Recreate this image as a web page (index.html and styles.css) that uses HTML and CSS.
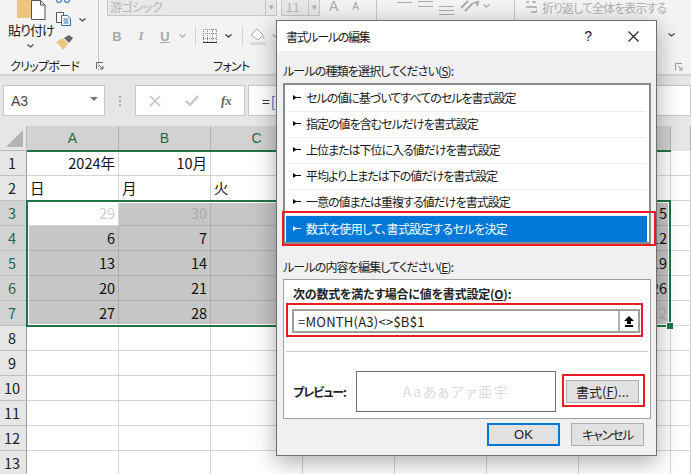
FILE: index.html
```html
<!DOCTYPE html>
<html lang="ja">
<head>
<meta charset="utf-8">
<title>書式ルールの編集</title>
<link rel="stylesheet" href="styles.css">
</head>
<body>
<div class="app">
  <header class="ribbon">
    <section class="group clip">
      <div class="clip-main">
        <div class="paste-col">
          <svg class="ic-paste" width="30" height="20" viewBox="0 0 30 20"><rect x="0" y="0" width="14" height="18" fill="#eec57f"/><path d="M14.5 .5h9l4.500 4.500v14.500h-13.500z" fill="#fff" stroke="#555"/><path d="M23.500 .5v4.500h4.500" fill="none" stroke="#555"/></svg>
          <span class="paste-label">貼り付け</span>
          <svg class="chev" width="7" height="4" viewBox="0 0 7 4"><path d="M.5.5l3 2.500 3-2.500" fill="none" stroke="#444" stroke-width="1.2"/></svg>
        </div>
        <div class="tool-col">
          <svg class="ic-cut" width="16" height="4" viewBox="0 0 16 4"><circle cx="3" cy="0" r="2.500" fill="none" stroke="#3d80c4" stroke-width="1.2"/><circle cx="11" cy="0" r="2.500" fill="none" stroke="#3d80c4" stroke-width="1.2"/></svg>
          <div class="copy-row">
            <svg width="16" height="14" viewBox="0 0 16 14"><path d="M.5.5h7v10h-7z" fill="#fff" stroke="#555"/><path d="M5.500 3.500h6l3 3v7h-9z" fill="#fff" stroke="#2f6ea8"/><path d="M7.500 7h5M7.500 9h5M7.500 11h5" stroke="#2f6ea8"/></svg>
            <svg class="chev" width="7" height="4" viewBox="0 0 7 4"><path d="M.5.5l3 2.500 3-2.500" fill="none" stroke="#444" stroke-width="1.2"/></svg>
          </div>
          <svg class="ic-brush" width="17" height="15" viewBox="0 0 17 15"><path d="M0 7l7-4 5 6-5 6c-2-3-4-5-7-8z" fill="#eec57f"/><path d="M8 3l5-3 4 3-4 5z" fill="#666"/></svg>
        </div>
      </div>
      <div class="group-label clip-label"><span>クリップボード</span><svg class="launcher" width="8" height="8" viewBox="0 0 8 8"><path d="M.5 7V.5H7M3 3l4 4M4 7h3V4" fill="none" stroke="#666"/></svg></div>
    </section>
    <section class="group font">
      <div class="font-top">
        <div class="combo name"><span class="combo-text">游ゴシック</span><span class="combo-drop">▾</span></div>
        <div class="combo size"><span class="combo-text">11</span><span class="combo-drop">▾</span></div>
        <span class="grow big">A</span>
        <span class="grow small">A</span>
      </div>
      <div class="font-tools">
        <b class="fmt b">B</b>
        <i class="fmt i">I</i>
        <u class="fmt u">U</u>
        <svg class="chev chev-u" width="7" height="4" viewBox="0 0 7 4"><path d="M.5.5l3 2.500 3-2.500" fill="none" stroke="#aaa" stroke-width="1.2"/></svg>
        <span class="vsep"></span>
        <svg class="ic-border" width="14" height="14" viewBox="0 0 14 14"><path d="M.5 0v14M4.500 0v14M9.500 0v14M13.500 0v14M0 .5h14M0 4.500h14M0 9.500h14" fill="none" stroke="#8a8a8a" stroke-dasharray="1 1"/><path d="M0 13.500h14" stroke="#333"/></svg>
        <svg class="chev chev-b" width="7" height="4" viewBox="0 0 7 4"><path d="M.5.5l3 2.500 3-2.500" fill="none" stroke="#333" stroke-width="1.2"/></svg>
        <span class="vsep"></span>
        <svg class="ic-fill" width="17" height="17" viewBox="0 0 17 17"><path d="M1 7l6-6 6 6-5 5z" fill="#fff" stroke="#aaa"/><path d="M13 8l2 3-2 0z" fill="#aaa"/><rect x="0" y="14" width="16" height="3" fill="#e4dcdc"/></svg>
        <svg class="chev chev-f" width="7" height="4" viewBox="0 0 7 4"><path d="M.5.5l3 2.500 3-2.500" fill="none" stroke="#aaa" stroke-width="1.2"/></svg>
      </div>
      <div class="group-label font-label">フォント</div>
    </section>
    <section class="group align">
      <div class="align-top">
        <svg width="15" height="3" viewBox="0 0 15 3"><path d="M0 1.500h15" stroke="#aaa"/></svg>
        <svg width="15" height="8" viewBox="0 0 15 8"><path d="M0 1.500h15M0 6.500h15" stroke="#aaa"/></svg>
        <svg class="al3" width="15" height="12" viewBox="0 0 15 12"><path d="M0 2.500h15M0 6.500h15M0 10.500h15" stroke="#aaa"/></svg>
        <svg class="orient" width="20" height="12" viewBox="0 0 20 12"><path d="M1 8l7-7M5 11l8-8M14 3l4-1-1 4" fill="none" stroke="#aaa" stroke-width="2"/></svg>
        <svg class="chev chev-o" width="7" height="4" viewBox="0 0 7 4"><path d="M.5.5l3 2.500 3-2.500" fill="none" stroke="#aaa" stroke-width="1.2"/></svg>
      </div>
    </section>
    <section class="group wrap">
      <div class="wrap-row">
        <svg width="12" height="13" viewBox="0 0 12 13"><path d="M1 1h3M7 1h4M1 6h9a2 2 0 010 5H6" fill="none" stroke="#aaa" stroke-width="1.500"/></svg>
        <span>折り返して全体を表示する</span>
      </div>
      <svg class="chev chev-w" width="7" height="4" viewBox="0 0 7 4"><path d="M.5.5l3 2.500 3-2.500" fill="none" stroke="#444" stroke-width="1.2"/></svg>
      <svg class="launcher launcher-w" width="8" height="8" viewBox="0 0 8 8"><path d="M.5 7V.5H7M3 3l4 4M4 7h3V4" fill="none" stroke="#999"/></svg>
    </section>
  </header>

  <div class="formula-bar">
    <div class="namebox"><span>A3</span><span class="nb-drop"></span></div>
    <span class="dots"></span>
    <div class="fx-buttons">
      <svg width="12" height="12" viewBox="0 0 12 12"><path d="M1 1l10 10M11 1L1 11" stroke="#c4c4c4" stroke-width="1.600"/></svg>
      <svg width="14" height="12" viewBox="0 0 14 12"><path d="M1 6l4 4 8-9" fill="none" stroke="#c4c4c4" stroke-width="2.200"/></svg>
      <span class="fx">fx</span>
    </div>
    <div class="fx-input">=<span class="fx-ref">[</span></div>
  </div>

  <div class="sheet">
    <div class="corner"><span></span></div>
    <div class="colh sel">A</div><div class="colh sel">B</div><div class="colh sel">C</div><div class="colh sel">D</div><div class="colh sel">E</div><div class="colh sel">F</div><div class="colh sel">G</div><div class="colh"></div>

    <div class="rowh">1</div><div class="cell num">2024年</div><div class="cell num">10月</div><div class="cell"></div><div class="cell"></div><div class="cell"></div><div class="cell"></div><div class="cell"></div><div class="cell"></div>
    <div class="rowh">2</div><div class="cell">日</div><div class="cell">月</div><div class="cell">火</div><div class="cell"></div><div class="cell"></div><div class="cell"></div><div class="cell"></div><div class="cell"></div>
    <div class="rowh sel">3</div><div class="cell num faint">29</div><div class="cell num gray faint">30</div><div class="cell gray"></div><div class="cell gray"></div><div class="cell gray"></div><div class="cell gray"></div><div class="cell num gray">5</div><div class="cell"></div>
    <div class="rowh sel">4</div><div class="cell num gray">6</div><div class="cell num gray">7</div><div class="cell gray"></div><div class="cell gray"></div><div class="cell gray"></div><div class="cell gray"></div><div class="cell num gray">12</div><div class="cell"></div>
    <div class="rowh sel">5</div><div class="cell num gray">13</div><div class="cell num gray">14</div><div class="cell gray"></div><div class="cell gray"></div><div class="cell gray"></div><div class="cell gray"></div><div class="cell num gray">19</div><div class="cell"></div>
    <div class="rowh sel">6</div><div class="cell num gray">20</div><div class="cell num gray">21</div><div class="cell gray"></div><div class="cell gray"></div><div class="cell gray"></div><div class="cell gray"></div><div class="cell num gray">26</div><div class="cell"></div>
    <div class="rowh sel">7</div><div class="cell num gray">27</div><div class="cell num gray">28</div><div class="cell gray"></div><div class="cell gray"></div><div class="cell gray"></div><div class="cell gray"></div><div class="cell num gray faint">2</div><div class="cell"></div>
    <div class="rowh">8</div><div class="cell"></div><div class="cell"></div><div class="cell"></div><div class="cell"></div><div class="cell"></div><div class="cell"></div><div class="cell"></div><div class="cell"></div>
    <div class="rowh">9</div><div class="cell"></div><div class="cell"></div><div class="cell"></div><div class="cell"></div><div class="cell"></div><div class="cell"></div><div class="cell"></div><div class="cell"></div>
    <div class="rowh">10</div><div class="cell"></div><div class="cell"></div><div class="cell"></div><div class="cell"></div><div class="cell"></div><div class="cell"></div><div class="cell"></div><div class="cell"></div>
    <div class="rowh">11</div><div class="cell"></div><div class="cell"></div><div class="cell"></div><div class="cell"></div><div class="cell"></div><div class="cell"></div><div class="cell"></div><div class="cell"></div>
    <div class="rowh">12</div><div class="cell"></div><div class="cell"></div><div class="cell"></div><div class="cell"></div><div class="cell"></div><div class="cell"></div><div class="cell"></div><div class="cell"></div>
    <div class="rowh">13</div><div class="cell"></div><div class="cell"></div><div class="cell"></div><div class="cell"></div><div class="cell"></div><div class="cell"></div><div class="cell"></div><div class="cell"></div>
    <div class="selection"><span class="handle"></span></div>
    <div class="col-mark"></div>
  </div>

  <div class="dialog">
    <div class="dlg-title">
      <span class="dlg-name">書式ルールの編集</span>
      <span class="dlg-help">?</span>
      <svg class="dlg-close" width="11" height="11" viewBox="0 0 11 11"><path d="M.5.5l10 10M10.500.5l-10 10" stroke="#222" stroke-width="1.100"/></svg>
    </div>
    <div class="dlg-body">
      <div class="dlg-label">ルールの種類を選択してください(<u>S</u>):</div>
      <ul class="rule-list">
        <li><svg class="tick" width="8" height="5" viewBox="0 0 8 5"><path d="M0 0v5l3-2h5V2H3z"/></svg>セルの値に基づいてすべてのセルを書式設定</li>
        <li><svg class="tick" width="8" height="5" viewBox="0 0 8 5"><path d="M0 0v5l3-2h5V2H3z"/></svg>指定の値を含むセルだけを書式設定</li>
        <li><svg class="tick" width="8" height="5" viewBox="0 0 8 5"><path d="M0 0v5l3-2h5V2H3z"/></svg>上位または下位に入る値だけを書式設定</li>
        <li><svg class="tick" width="8" height="5" viewBox="0 0 8 5"><path d="M0 0v5l3-2h5V2H3z"/></svg>平均より上または下の値だけを書式設定</li>
        <li><svg class="tick" width="8" height="5" viewBox="0 0 8 5"><path d="M0 0v5l3-2h5V2H3z"/></svg>一意の値または重複する値だけを書式設定</li>
        <li class="active"><svg class="tick" width="8" height="5" viewBox="0 0 8 5"><path d="M0 0v5l3-2h5V2H3z" fill="#fff"/></svg>数式を使用して、書式設定するセルを決定</li>
      </ul>
      <div class="dlg-label second">ルールの内容を編集してください(<u>E</u>):</div>
      <div class="edit-box">
        <div class="bold-label">次の数式を満たす場合に値を書式設定(<u>O</u>):</div>
        <div class="formula-input">
          <span class="formula-text">=MONTH(A3)&lt;&gt;$B$1</span>
          <span class="ref-btn"><svg width="10" height="11" viewBox="0 0 10 11"><path d="M5 0l5 5H7v3H3V5H0zM1 9h8v2H1z"/></svg></span>
        </div>
        <div class="hr"></div>
        <div class="preview-row">
          <span class="preview-label">プレビュー:</span>
          <div class="preview">Aaあぁアァ亜宇</div>
          <button class="btn fmt-btn">書式(<u>F</u>)...</button>
        </div>
      </div>
      <div class="dlg-actions">
        <button class="btn ok">OK</button>
        <button class="btn cancel">キャンセル</button>
      </div>
    </div>
    <span class="mark mark-rule"></span>
    <span class="mark mark-formula"></span>
    <span class="mark mark-format"></span>
  </div>
</div>
</body>
</html>
```

FILE: styles.css
```css
* { box-sizing: border-box; }
html, body { margin: 0; height: 100%; overflow: hidden; }
body {
  font-family: "Noto Sans CJK JP", "Noto Sans", sans-serif;
  font-size: 12px;
  font-feature-settings: "palt";
  color: #1a1a1a;
  background: #fff;
}
.app { position: relative; width: 691px; height: 474px; overflow: hidden; }

/* ribbon */
.ribbon { display: flex; height: 76px; background: #f3f3f3; border-bottom: 2px solid #d4d4d4; overflow: hidden; }
.group { position: relative; height: 71px; border-right: 1px solid #c6c6c6; flex: none; }
.clip { width: 99px; }
.font { width: 278px; padding-left: 8px; }
.align { width: 138px; }
.wrap { flex: 1; border-right: 0; padding: 0 0 0 10px; }
.group-label { font-size: 12px; letter-spacing: -.7px; line-height: 14px; white-space: nowrap; }
.chev { display: block; flex: none; }

.clip-main { display: flex; height: 59px; }
.paste-col { width: 55px; padding-left: 17px; display: flex; flex-direction: column; }
.ic-paste { margin-bottom: 1px; }
.paste-label { font-size: 13px; letter-spacing: -.9px; line-height: 18px; margin-left: -9px; white-space: nowrap; }
.paste-col .chev { margin: 5px 0 0 10px; }
.tool-col { display: flex; flex-direction: column; padding-left: 1px; }
.ic-cut { margin-bottom: 8px; }
.copy-row { display: flex; gap: 7px; align-items: flex-start; }
.copy-row .chev { margin-top: 6px; }
.ic-brush { margin-top: 9px; }
.clip-label { display: flex; align-items: center; padding: 0 0 0 10px; }
.launcher { display: block; flex: none; }
.clip-label .launcher { margin-left: 17px; }

.font-top { display: flex; height: 16px; margin-top: -1px; }
.combo { display: flex; height: 17px; border: 1px solid #c6c6c6; background: #e8e8e8; color: #b4b4b4; line-height: 14px; }
.combo.name { width: 170px; }
.combo.size { width: 39px; margin-left: 4px; }
.combo-text { flex: 1; padding-left: 2px; white-space: nowrap; letter-spacing: -.5px; }
.combo.size .combo-text { padding-left: 4px; letter-spacing: 0; }
.combo-drop { width: 11px; border-left: 1px solid #c6c6c6; font-size: 9px; text-align: center; color: #aaa; }
.grow { color: #aaa; font-family: "Liberation Sans", sans-serif; line-height: 14px; }
.grow.big { font-size: 14px; margin-left: 9px; }
.grow.small { font-size: 10px; margin-left: 14px; line-height: 16px; }

.font-tools { display: flex; align-items: center; height: 24px; margin-top: 9px; padding-left: 5px; }
.fmt { width: 10px; font-family: "Liberation Sans", sans-serif; font-size: 13px; color: #a9a9a9; text-align: center; }
.fmt.b { font-weight: 700; }
.fmt.i { margin-left: 14px; font-family: "Liberation Serif", serif; font-weight: 700; }
.fmt.u { margin-left: 14px; font-weight: 700; }
.chev-u { margin-left: 9px; }
.vsep { width: 1px; height: 20px; background: #d4d4d4; margin: 0 7px 0 9px; }
.ic-border { margin-right: 8px; }
.chev-b { margin-right: 1px; }
.ic-fill { margin-right: 5px; }
.font-label { position: absolute; left: 114px; top: 59px; }

.align-top { display: flex; gap: 6px; align-items: flex-start; padding-left: 20px; }
.align-top svg { display: block; }
.align-top svg:first-child { margin-top: 1px; }
.align-top .al3 { margin-top: 4px; }
.align-top .chev-o { margin: 4px 0 0 -3px; }

.wrap-row { display: flex; gap: 5px; align-items: center; height: 14px; color: #b0b0b0; font-size: 12px; letter-spacing: -.95px; white-space: nowrap; }
.chev-w { margin: 19px 0 0 143px; }
.launcher-w { margin: 26px 0 0 150px; }

/* formula bar */
.formula-bar { display: flex; align-items: center; height: 50px; padding: 8px 0 9px 3px; background: #e6e6e6; }
.namebox { display: flex; align-items: center; justify-content: space-between; width: 102px; height: 31px; padding: 0 6px 0 7px; background: #fff; border: 1px solid #c6c6c6; font-family: "Liberation Sans", sans-serif; font-size: 14px; color: #444; }
.nb-drop { width: 0; height: 0; border: 4px solid transparent; border-top: 4px solid #777; border-bottom: 0; margin-bottom: 3px; }
.dots { width: 2px; height: 10px; margin: 0 14px; background: repeating-linear-gradient(#aaa 0 2px, transparent 2px 4px); }
.fx-buttons { display: flex; align-items: center; width: 110px; height: 31px; padding: 0 12px 0 13px; gap: 24px; background: #fff; border: 1px solid #c6c6c6; }
.fx { font-family: "Liberation Serif", serif; font-style: italic; font-weight: 700; font-size: 13px; color: #666; margin-left: -2px; }
.fx-input { flex: 1; height: 31px; margin-left: 3px; padding-left: 13px; background: #fff; border: 1px solid #c6c6c6; font-size: 14px; line-height: 30px; color: #333; }
.fx-ref { color: #2a6fc0; margin-left: 1px; }

/* sheet */
.sheet { position: relative; display: grid; grid-template-columns: 27px repeat(7, 92px) 1fr; grid-auto-rows: 25px; font-size: 14.500px; font-feature-settings: normal; line-height: 24px; }
.corner { background: #e6e6e6; border-right: 1px solid #b8b8b8; border-bottom: 1px solid #b8b8b8; display: flex; align-items: flex-end; justify-content: flex-end; padding: 0 3px 3px 0; }
.corner span { width: 0; height: 0; border-left: 17px solid transparent; border-bottom: 17px solid #b4b4b4; }
.colh { background: #e6e6e6; border-right: 1px solid #b0b0b0; text-align: center; color: #444; font-family: "Liberation Sans", sans-serif; font-size: 14px; }
.colh.sel { background: #d2d2d2; color: #1f6b45; }
.rowh { background: #e6e6e6; border-right: 1px solid #9c9c9c; border-bottom: 1px solid #c0c0c0; text-align: center; color: #222; padding-right: 2px; }
.rowh.sel { background: #d2d2d2; color: #1f6b45; }
.cell { border-right: 1px solid #d4d4d4; border-bottom: 1px solid #d4d4d4; padding: 0 3px; color: #111; white-space: nowrap; overflow: hidden; }
.cell.num { text-align: right; }
.cell.gray { background: #c6c6c6; border-color: #acacac; }
.cell.faint { color: #d0d0d0; }
.cell.gray.faint { color: #aaa; }
.selection { position: absolute; left: 26px; top: 74px; width: 645px; height: 127px; border: 2px solid #217346; box-shadow: inset 0 0 0 1px #fff; }
.handle { position: absolute; right: -4px; bottom: -4px; width: 6px; height: 6px; background: #217346; box-shadow: 0 0 0 1px #fff; }
.col-mark { position: absolute; left: 27px; top: 24px; width: 644px; height: 2px; background: #217346; }

/* dialog */
.dialog { position: absolute; left: 276px; top: 20px; width: 381px; height: 436px; display: flex; flex-direction: column; background: #f0f0f0; border: 1px solid #6f6f6f; box-shadow: 0 6px 22px rgba(0,0,0,.33); }
.dlg-title { display: flex; align-items: center; height: 30px; padding: 0 17px 0 9px; background: #fff; }
.dlg-name { flex: 1; font-size: 12px; letter-spacing: -1.3px; }
.dlg-help { margin-right: 36px; font-family: "Liberation Sans", sans-serif; font-size: 14px; }
.dlg-close { display: block; }
.dlg-body { flex: 1; padding: 0 5px 0 6px; }
.dlg-label { height: 32px; padding-top: 11px; line-height: 18px; letter-spacing: -.85px; font-size: 12px; color: #222; }
.dlg-label.second { height: 35px; padding-top: 14px; }
.rule-list { list-style: none; margin: 0; padding: 1px 2px 1px 1px; height: 161px; background: #fff; border: 2px solid #8a8a8a; }
.rule-list li { display: flex; align-items: center; height: 26px; margin: 0 1px; padding: 0 0 2px 6px; gap: 5px; border-bottom: 1px solid #ededed; font-size: 12px; letter-spacing: -1px; white-space: nowrap; }
.tick { display: block; flex: none; }
.rule-list li.active { height: 26px; margin: 0; padding-left: 7px; background: #0078d7; color: #fff; border-bottom: 0; letter-spacing: -.6px; }
.edit-box { height: 140px; padding: 6px 1px 0; background: #fff; border: 1px solid #a0a0a0; }
.bold-label { padding-left: 8px; font-weight: 700; font-size: 12px; line-height: 16px; letter-spacing: -.22px; color: #222; }
.formula-input { display: flex; align-items: center; justify-content: space-between; height: 24px; margin: 7px 9px 0 7px; padding-left: 4px; background: #fff; border: 2px solid #a0a0a0; font-size: 13px; letter-spacing: .25px; }
.formula-text { font-feature-settings: normal; }
.ref-btn { display: flex; align-items: center; justify-content: center; width: 20px; height: 20px; border-left: 2px solid #b5b5b5; background: #fff; }
.ref-btn svg { display: block; }
.hr { height: 1px; margin: 18px 1px 0; background: #c8c8c8; }
.preview-row { display: flex; align-items: center; margin-top: 19px; padding-left: 8px; }
.preview-label { width: 63px; font-weight: 700; font-size: 12px; letter-spacing: -1px; color: #222; white-space: nowrap; }
.preview { width: 200px; height: 41px; border: 1px solid #707070; background: #fff; text-align: center; line-height: 38px; font-size: 14px; letter-spacing: 1.5px; color: #dcdcdc; }
.btn { height: 23px; width: 73px; padding: 0; background: #e1e1e1; border: 1px solid #adadad; font: inherit; font-size: 12.500px; letter-spacing: -.6px; color: #222; }
.fmt-btn { margin-left: 10px; font-size: 13px; letter-spacing: 0; }
.cancel { letter-spacing: -1.2px; }
.dlg-actions { display: flex; justify-content: flex-end; gap: 11px; padding: 4px 7px 0 0; }
.btn.ok { border: 2px solid #0078d7; font-family: "Liberation Sans", sans-serif; font-size: 13px; letter-spacing: 0; }
.mark { position: absolute; border: 2px solid #ed1c24; pointer-events: none; }
.mark-rule { left: 5px; top: 190px; width: 374px; height: 35px; }
.mark-formula { left: 9px; top: 282px; width: 357px; height: 34px; }
.mark-format { left: 285px; top: 353px; width: 83px; height: 33px; }
```
